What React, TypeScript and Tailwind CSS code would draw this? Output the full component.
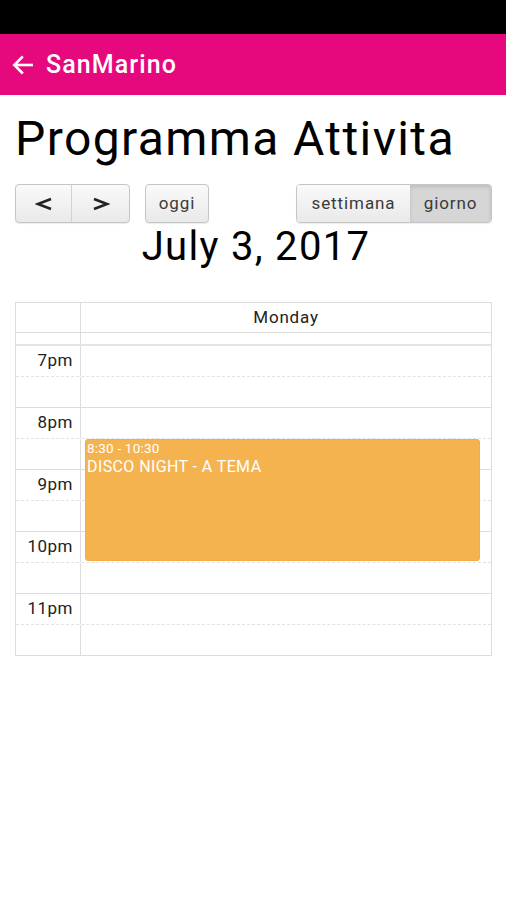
import React from 'react';

const hours = ['7pm', '8pm', '9pm', '10pm', '11pm'];

export default function App() {
  return (
    <div className="w-[506px] h-[900px] bg-white font-['Roboto',sans-serif] text-black">
      <div className="h-[34px] bg-black" />
      <div className="h-[61px] bg-[#e5097d] flex items-center px-[10px] gap-[10px] text-white">
        <svg width="26" height="26" viewBox="0 0 24 24" fill="none" stroke="white" strokeWidth="2.4" strokeLinecap="square">
          <path d="M20 12H5" />
          <path d="M11 5l-7 7 7 7" />
        </svg>
        <span className="text-[25px] font-medium leading-none tracking-[1.1px]">SanMarino</span>
      </div>

      <div className="px-[15px] pt-[17px]">
        <h1 className="text-[48px] leading-[54px] tracking-[1.4px]">Programma Attivita</h1>

        <div className="mt-[18px] flex items-center h-[39px]">
          <div className="flex h-full rounded-[4px] border border-[#c6c6c6] shadow-[0_1px_1px_rgba(0,0,0,0.08)] overflow-hidden bg-gradient-to-b from-[#fafafa] to-[#e9e9e9]">
            <button className="w-[56px] h-full flex items-center justify-center border-r border-[#d2d2d2] text-[#222]">
              <svg width="18" height="14" viewBox="0 0 18 14" fill="none" stroke="#222" strokeWidth="2.6">
                <path d="M16 2L3 7l13 5" />
              </svg>
            </button>
            <button className="w-[57px] h-full flex items-center justify-center text-[#222]">
              <svg width="18" height="14" viewBox="0 0 18 14" fill="none" stroke="#222" strokeWidth="2.6">
                <path d="M2 2l13 5-13 5" />
              </svg>
            </button>
          </div>
          <button className="ml-[15px] w-[64px] h-full rounded-[4px] border border-[#c6c6c6] shadow-[0_1px_1px_rgba(0,0,0,0.08)] bg-gradient-to-b from-[#fafafa] to-[#e9e9e9] text-[17px] tracking-[0.9px] text-[#3a3a3a]">
            oggi
          </button>
          <div className="ml-auto mr-[-1px] flex h-full rounded-[4px] border border-[#c6c6c6] shadow-[0_1px_1px_rgba(0,0,0,0.08)] overflow-hidden">
            <button className="w-[113px] h-full bg-gradient-to-b from-[#fafafa] to-[#e9e9e9] text-[17px] tracking-[0.9px] text-[#3a3a3a]">
              settimana
            </button>
            <button className="w-[81px] h-full bg-[#d6d6d6] shadow-[inset_0_2px_4px_rgba(0,0,0,0.12)] text-[17px] tracking-[0.9px] text-[#3a3a3a]">
              giorno
            </button>
          </div>
        </div>

        <div className="text-center text-[40px] leading-[46px] mt-[1px] pl-[6px] tracking-[1.3px]">July 3, 2017</div>

        <div className="mt-[32px] w-[477px] border border-[#dddddd]">
          <div className="flex h-[30px] border-b border-[#dddddd]">
            <div className="w-[65px] border-r border-[#dddddd]" />
            <div className="flex-1 text-center text-[17px] tracking-[0.8px] leading-[29px] text-[#222]">Monday</div>
          </div>
          <div className="flex h-[13px] border-b-2 border-[#e4e4e4]">
            <div className="w-[65px] border-r border-[#dddddd]" />
            <div className="flex-1" />
          </div>
          <div className="relative">
            {hours.map((h, i) => (
              <div key={h} className={i > 0 ? 'border-t border-[#dddddd]' : ''}>
                <div className="flex h-[31px] border-b border-dashed border-[#e2e2e2]">
                  <div className="w-[65px] border-r border-[#dddddd] text-right pr-[7px] text-[17px] tracking-[0.5px] leading-[28px] text-[#222]">
                    {h}
                  </div>
                  <div className="flex-1" />
                </div>
                <div className="flex h-[30px]">
                  <div className="w-[65px] border-r border-[#dddddd]" />
                  <div className="flex-1" />
                </div>
              </div>
            ))}
            <div className="absolute left-[69px] right-[11px] top-[93px] h-[122px] rounded-[3px] bg-[#f5b34f] border border-[#f3ac45] text-white px-[1px] pt-[1px]">
              <div className="text-[13.5px] leading-[14px] tracking-[0.2px]">8:30 - 10:30</div>
              <div className="text-[16px] leading-[24px] tracking-[0.4px]">DISCO NIGHT - A TEMA</div>
            </div>
          </div>
        </div>
      </div>
    </div>
  );
}
